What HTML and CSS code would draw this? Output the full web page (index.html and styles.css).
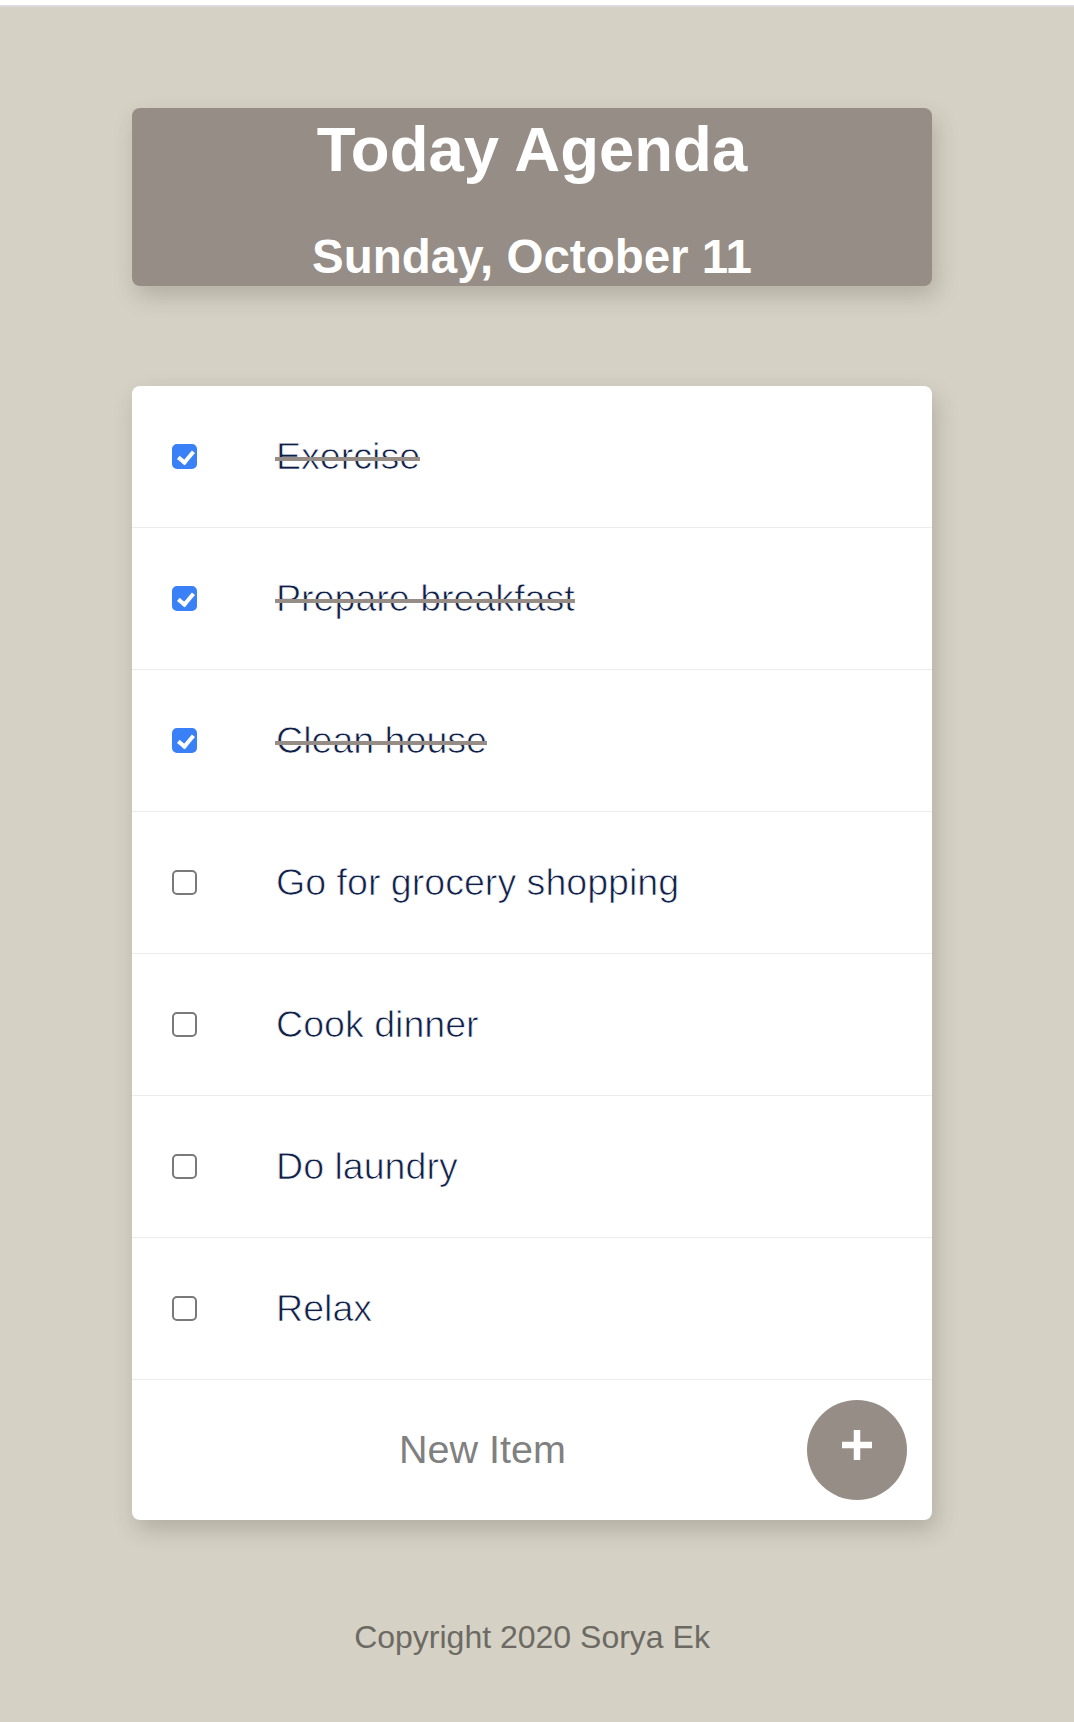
FILE: index.html
```html
<!DOCTYPE html>
<html lang="en">
<head>
<meta charset="utf-8">
<title>Today Agenda</title>
<link rel="stylesheet" href="styles.css">
</head>
<body>
<div class="topbar"></div>
<main class="page">
  <header class="heading card">
    <h1 class="heading-title">Today Agenda</h1>
    <h2 class="heading-date">Sunday, October 11</h2>
  </header>

  <section class="list card">
    <label class="item"><input type="checkbox" class="check" checked><span class="item-text done">Exercise</span></label>
    <label class="item"><input type="checkbox" class="check" checked><span class="item-text done">Prepare breakfast</span></label>
    <label class="item"><input type="checkbox" class="check" checked><span class="item-text done">Clean house</span></label>
    <label class="item"><input type="checkbox" class="check"><span class="item-text">Go for grocery shopping</span></label>
    <label class="item"><input type="checkbox" class="check"><span class="item-text">Cook dinner</span></label>
    <label class="item"><input type="checkbox" class="check"><span class="item-text">Do laundry</span></label>
    <label class="item"><input type="checkbox" class="check"><span class="item-text">Relax</span></label>
    <form class="new-item">
      <input type="text" class="new-input" placeholder="New Item" name="newItem" autocomplete="off">
      <button type="button" class="add-btn" aria-label="Add">
        <svg class="plus" width="30" height="30" viewBox="0 0 30 30" aria-hidden="true">
          <rect x="0" y="11.75" width="30" height="6.5" fill="#ffffff"/>
          <rect x="11.75" y="0" width="6.5" height="30" fill="#ffffff"/>
        </svg>
      </button>
    </form>
  </section>

  <footer class="footer">Copyright 2020 Sorya Ek</footer>
</main>
</body>
</html>
```

FILE: styles.css
```css
html {
  background: #d5d1c5;
}

body {
  margin: 0;
  min-height: 100vh;
  background: #d5d1c5;
  font-family: "Liberation Sans", Arial, Helvetica, sans-serif;
  padding-right: 10px;
}

.topbar {
  height: 5px;
  background: #ffffff;
  border-bottom: 2px solid #dddbe2;
  margin-right: -10px;
}

.page {
  width: 800px;
  margin: 0 auto;
  display: flex;
  flex-direction: column;
}

.card {
  border-radius: 8px;
  box-shadow: 4px 10px 22px rgba(60, 55, 40, 0.22);
}

.heading {
  margin-top: 101px;
  background: #968d86;
  padding: 9px 0 5px;
  text-align: center;
  color: #ffffff;
}

.heading-title {
  margin: 0;
  font-size: 63.5px;
  line-height: 64px;
  font-weight: 700;
}

.heading-date {
  margin: 52px 0 0;
  font-size: 47.5px;
  line-height: 48px;
  font-weight: 700;
}

.list {
  margin-top: 100px;
  background: #ffffff;
  display: flex;
  flex-direction: column;
}

.item {
  height: 141px;
  display: flex;
  align-items: center;
  border-bottom: 1px solid #ececec;
  padding-left: 40px;
  gap: 79px;
  cursor: pointer;
}

.check {
  appearance: none;
  -webkit-appearance: none;
  margin: 0;
  width: 25px;
  height: 25px;
  flex: none;
  border: 2px solid #7a7a7a;
  border-radius: 5px;
  background: #ffffff;
  position: relative;
  cursor: pointer;
}

.check:checked {
  background: #3a80f6;
  border-color: #3a80f6;
}

.check:checked::after {
  content: "";
  position: absolute;
  left: 6.5px;
  top: 1.5px;
  width: 6px;
  height: 12px;
  border-right: 4px solid #ffffff;
  border-bottom: 4px solid #ffffff;
  transform: rotate(40deg);
}

.item-text {
  font-family: "Liberation Sans", Arial, Helvetica, sans-serif;
  font-weight: 400;
  font-size: 37.6px;
  line-height: 1;
  color: #0f2048;
  -webkit-text-stroke: 0.75px #ffffff;
}

.item-text.done {
  position: relative;
}

.item-text.done::after {
  content: "";
  position: absolute;
  left: -1px;
  right: 0;
  top: 19.5px;
  height: 4px;
  background: #968d86;
}

.new-item {
  height: 140px;
  display: flex;
  align-items: center;
  margin: 0;
}

.new-input {
  flex: 1;
  min-width: 0;
  border: none;
  outline: none;
  background: transparent;
  padding: 0 0 0 26px;
  margin: 0;
  font-family: "Liberation Sans", Arial, sans-serif;
  font-size: 39.5px;
  line-height: 1.2;
  text-align: center;
  color: #333333;
}

.new-input::placeholder {
  color: #808080;
}

.add-btn {
  flex: none;
  width: 100px;
  height: 100px;
  margin-right: 25px;
  border: none;
  border-radius: 50%;
  background: #968d86;
  padding: 0;
  display: flex;
  align-items: center;
  justify-content: center;
  cursor: pointer;
}

.plus {
  margin-top: -11px;
}

.footer {
  margin-top: 101px;
  text-align: center;
  font-size: 32px;
  line-height: 32px;
  color: #6c6a63;
}
```
